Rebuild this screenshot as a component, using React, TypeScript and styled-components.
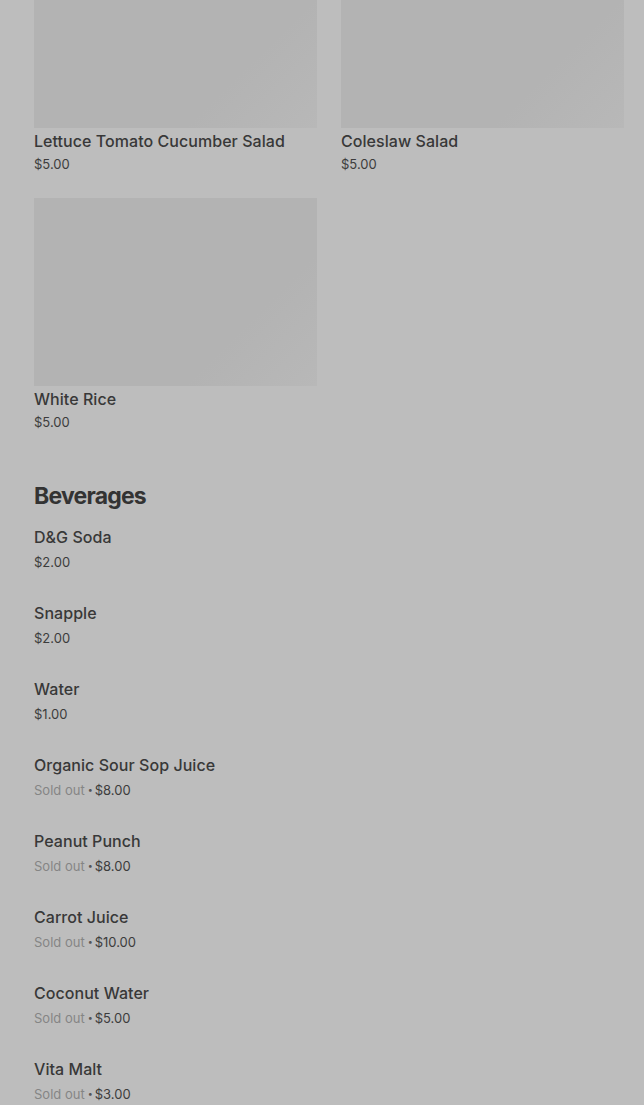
import React from "react";
import styled, { createGlobalStyle } from "styled-components";

const Global = createGlobalStyle`
  html, body { margin: 0; padding: 0; background: #bdbdbd; }
  body { font-family: Inter, "Liberation Sans", sans-serif; color: #333333; overflow: hidden; }
`;

const Page = styled.main`
  padding: 0 20px 0 34px;
  margin-top: -60px;
`;

const Grid = styled.div`
  display: grid;
  grid-template-columns: 1fr 1fr;
  column-gap: 24px;
  row-gap: 25px;
`;

const Card = styled.div`
  display: flex;
  flex-direction: column;
`;

const Thumb = styled.div`
  height: 188px;
  background: linear-gradient(135deg, #b3b3b3 0%, #b3b3b3 72%, #b8b8b8 100%);
`;

const Name = styled.div`
  font-size: 16px;
  font-weight: 500;
  line-height: 20px;
  letter-spacing: 0.05px;
  color: #383838;
`;

const CardName = styled(Name)`
  margin-top: 3px;
`;

const Price = styled.div<{ $gap?: number }>`
  font-size: 13px;
  line-height: 18px;
  margin-top: ${(p) => p.$gap ?? 4}px;
  color: #3c3c3c;
  display: flex;
  align-items: center;
`;

const Sold = styled.span`
  color: #858585;
`;

const Dot = styled.span`
  font-size: 9px;
  margin: 0 2px 0 3px;
  color: #555555;
`;

const Section = styled.section`
  margin-top: 50px;
`;

const Heading = styled.h2`
  margin: 0 0 16px;
  font-size: 23px;
  font-weight: 700;
  letter-spacing: -0.8px;
  line-height: 30px;
  color: #333333;
`;

const List = styled.div`
  display: flex;
  flex-direction: column;
  gap: 32px;
`;

const Row = styled.div`
  display: flex;
  flex-direction: column;
`;

const salads = [
  { name: "Lettuce Tomato Cucumber Salad", price: "$5.00" },
  { name: "Coleslaw Salad", price: "$5.00" },
  { name: "White Rice", price: "$5.00" },
];

const drinks = [
  { name: "D&G Soda", price: "$2.00", sold: false },
  { name: "Snapple", price: "$2.00", sold: false },
  { name: "Water", price: "$1.00", sold: false },
  { name: "Organic Sour Sop Juice", price: "$8.00", sold: true },
  { name: "Peanut Punch", price: "$8.00", sold: true },
  { name: "Carrot Juice", price: "$10.00", sold: true },
  { name: "Coconut Water", price: "$5.00", sold: true },
  { name: "Vita Malt", price: "$3.00", sold: true },
];

export default function App() {
  return (
    <>
      <Global />
      <Page>
        <Grid>
          {salads.map((s) => (
            <Card key={s.name}>
              <Thumb />
              <CardName>{s.name}</CardName>
              <Price>{s.price}</Price>
            </Card>
          ))}
        </Grid>
        <Section>
          <Heading>Beverages</Heading>
          <List>
            {drinks.map((d) => (
              <Row key={d.name}>
                <Name>{d.name}</Name>
                <Price $gap={6}>
                  {d.sold && <Sold>Sold out</Sold>}
                  {d.sold && <Dot>•</Dot>}
                  <span>{d.price}</span>
                </Price>
              </Row>
            ))}
          </List>
        </Section>
      </Page>
    </>
  );
}
